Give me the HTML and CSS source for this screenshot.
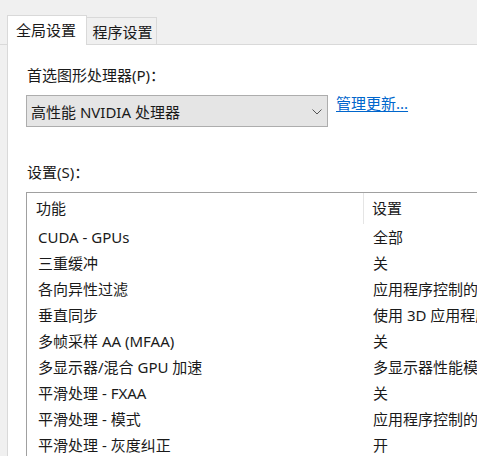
FILE: index.html
```html
<!DOCTYPE html>
<html lang="zh-CN">
<head>
  <meta charset="UTF-8">
  <meta name="viewport" content="width=device-width, initial-scale=1.0">
  <title>NVIDIA 控制面板 - 管理 3D 设置</title>
  <link rel="stylesheet" href="styles.css">
</head>
<body>
  <div class="window">
    <div class="tabs">
      <div class="tab active">全局设置</div>
      <div class="tab">程序设置</div>
    </div>
    <div class="panel">
      <div class="label label-gpu">首选图形处理器(P)：</div>
      <div class="gpu-row">
        <div class="select">
          <span>高性能 NVIDIA 处理器</span>
          <svg class="chevron" width="10" height="6" viewBox="0 0 10 6">
            <polyline points="0.5,0.5 5,5 9.5,0.5" fill="none" stroke="#555" stroke-width="1"/>
          </svg>
        </div>
        <a class="link" href="#">管理更新...</a>
      </div>
      <div class="label label-settings">设置(S)：</div>
      <div class="list">
        <div class="list-head">
          <div class="col-feature">功能</div>
          <div class="col-value">设置</div>
        </div>
        <div class="list-row"><div class="col-feature">CUDA - GPUs</div><div class="col-value">全部</div></div>
        <div class="list-row"><div class="col-feature">三重缓冲</div><div class="col-value">关</div></div>
        <div class="list-row"><div class="col-feature">各向异性过滤</div><div class="col-value">应用程序控制的</div></div>
        <div class="list-row"><div class="col-feature">垂直同步</div><div class="col-value">使用 3D 应用程序设置</div></div>
        <div class="list-row"><div class="col-feature">多帧采样 AA (MFAA)</div><div class="col-value">关</div></div>
        <div class="list-row"><div class="col-feature">多显示器/混合 GPU 加速</div><div class="col-value">多显示器性能模式</div></div>
        <div class="list-row"><div class="col-feature">平滑处理 - FXAA</div><div class="col-value">关</div></div>
        <div class="list-row"><div class="col-feature">平滑处理 - 模式</div><div class="col-value">应用程序控制的</div></div>
        <div class="list-row"><div class="col-feature">平滑处理 - 灰度纠正</div><div class="col-value">开</div></div>
      </div>
    </div>
  </div>
</body>
</html>
```

FILE: styles.css
```css
html, body {
  margin: 0;
  padding: 0;
  background-color: #ffffff;
}
body {
  font-family: "Noto Sans", "Noto Sans CJK SC", sans-serif;
  font-size: 15px;
  color: #1a1a1a;
}
.window {
  width: 477px;
  height: 456px;
  overflow: hidden;
  background-color: #f0f0f0;
  display: flex;
  flex-direction: column;
}
.tabs {
  display: flex;
  align-items: flex-end;
  height: 29px;
  padding-top: 15px;
  padding-left: 7px;
  border-bottom: 1px solid #d9d9d9;
}
.tab {
  box-sizing: border-box;
  height: 27px;
  width: 70px;
  border: 1px solid #d9d9d9;
  border-left: none;
  border-bottom: none;
  background-color: #f0f0f0;
  text-align: center;
  line-height: 28px;
  padding-left: 2px;
}
.tab.active {
  height: 30px;
  width: 80px;
  margin-bottom: -1px;
  border-left: 1px solid #d9d9d9;
  background-color: #ffffff;
  line-height: 28px;
  padding-left: 0;
  padding-right: 2px;
}
.panel {
  flex: 1;
  margin-left: 7px;
  border-left: 1px solid #d9d9d9;
  background-color: #ffffff;
  padding-left: 19px;
}
.label {
  line-height: 20px;
}
.label-gpu {
  margin-top: 20px;
}
.gpu-row {
  display: flex;
  align-items: flex-start;
  margin-top: 10px;
  margin-left: -1px;
}
.select {
  box-sizing: border-box;
  width: 302px;
  height: 32px;
  border: 1px solid #adadad;
  background-color: #e5e5e5;
  display: flex;
  align-items: center;
  justify-content: space-between;
  padding: 0 5px 0 4px;
}
.chevron {
  display: block;
  margin-top: 1px;
}
.link {
  margin-left: 8px;
  line-height: 16px;
  color: #0066cc;
  text-decoration: underline;
  text-underline-offset: 2px;
}
.label-settings {
  margin-top: 35px;
}
.list {
  margin-top: 10px;
  margin-left: -1px;
  width: 450px;
  height: 300px;
  overflow: hidden;
  border: 1px solid #a0a0a0;
  border-right: none;
  border-bottom: none;
}
.list-head, .list-row {
  display: flex;
  white-space: nowrap;
}
.list-head {
  height: 31px;
  line-height: 31px;
}
.col-feature {
  flex-shrink: 0;
  box-sizing: border-box;
  width: 336px;
  padding-left: 11px;
}
.list-head .col-feature {
  border-right: 1px solid #e5e5e5;
  padding-left: 9px;
  width: 337px;
}
.list-row {
  height: 26px;
  line-height: 26px;
}
.col-value {
  flex-shrink: 0;
  padding-left: 8px;
}
.list-row .col-value {
  padding-left: 10px;
}
```
